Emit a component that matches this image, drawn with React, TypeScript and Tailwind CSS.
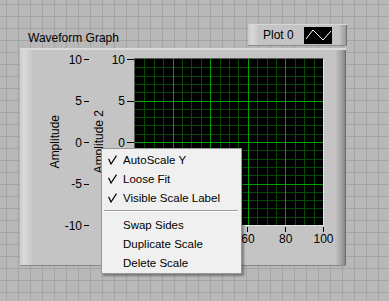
import React from 'react';

const yTicks = ['10', '5', '0', '-5', '-10'];
const xTicks = ['0', '20', '40', '60', '80', '100'];

const menuItems = [
  { label: 'AutoScale Y', checked: true },
  { label: 'Loose Fit', checked: true },
  { label: 'Visible Scale Label', checked: true },
  { label: '-' },
  { label: 'Swap Sides' },
  { label: 'Duplicate Scale' },
  { label: 'Delete Scale' },
];

function PlotGrid() {
  const w = 188;
  const h = 166;
  const minor: React.ReactNode[] = [];
  const major: React.ReactNode[] = [];
  for (let i = 1; i < 20; i++) {
    const x = Math.round((i * w) / 20) + 0.5;
    const y = Math.round((i * h) / 20) + 0.5;
    const v = <line key={'v' + i} x1={x} x2={x} y1={0} y2={h} stroke={i % 4 === 0 ? '#00a000' : '#064a06'} />;
    const hz = <line key={'h' + i} x1={0} x2={w} y1={y} y2={y} stroke={i % 5 === 0 ? '#00a000' : '#064a06'} />;
    (i % 4 === 0 ? major : minor).push(v);
    (i % 5 === 0 ? major : minor).push(hz);
  }
  return (
    <svg width={w} height={h} shapeRendering="crispEdges" className="block">
      {minor}
      {major}
    </svg>
  );
}

function YScale({ tickClass }: { tickClass: string }) {
  return (
    <div className="flex h-[168px] flex-col justify-between pt-px">
      {yTicks.map((v) => (
        <div key={v} className="flex h-px items-center justify-end">
          <span className="leading-[14px] whitespace-nowrap">{v}</span>
          <span className={tickClass} />
        </div>
      ))}
    </div>
  );
}

function Check() {
  return (
    <svg width="9" height="10" viewBox="0 0 9 10" className="block">
      <path d="M0.6 3.8 L3 9 L8.5 0.6" fill="none" stroke="#000" strokeWidth="1.2" />
    </svg>
  );
}

export default function App() {
  return (
    <div className="relative h-[301px] w-[389px] overflow-hidden bg-[#b8b8b8] bg-[linear-gradient(to_right,#a4a4a4_1px,transparent_1px),linear-gradient(to_bottom,#a4a4a4_1px,transparent_1px)] pt-[24px] pl-[20px] font-['Liberation_Sans',Arial,sans-serif] text-[12px] text-black [background-position:6px_4px] [background-size:12px_12px]">
      {/* label + legend */}
      <div className="flex w-[327px] items-end">
        <span className="mb-px ml-[8px] leading-[14px]">Waveform Graph</span>
        <div className="ml-auto flex h-[22px] w-[99px] items-center border-t border-b border-t-[#d6d6d6] border-b-[#8a8a8a] bg-[#c4c4c4]">
          <div className="h-full w-[10px] bg-[linear-gradient(to_right,#cacaca,#d8d8d8_40%,#c8c8c8)]" />
          <span className="ml-[5px] leading-[14px]">Plot 0</span>
          <div className="ml-auto h-[17px] w-[28px] bg-black">
            <svg width="28" height="17" className="block">
              <polyline points="2,12 9,3 19,13 27,4" fill="none" stroke="#fff" strokeWidth="1" />
            </svg>
          </div>
          <div className="ml-[8px] h-full w-[7px] border-r border-[#707070] bg-[linear-gradient(to_right,#bcbcbc,#9a9a9a)]" />
        </div>
      </div>

      {/* graph frame */}
      <div className="mt-[2px] flex h-[218px] w-[326px] border-t-2 border-b border-t-[#dadada] border-b-[#888888] bg-[#c4c4c4]">
        <div className="w-[12px] bg-[linear-gradient(to_right,#cbcbcb,#d9d9d9_30%,#c8c8c8)]" />
        <div className="flex flex-1 items-start pt-[8px]">
          <div className="flex h-[168px] w-[30px] items-center justify-end">
            <span className="rotate-180 leading-[14px] whitespace-nowrap [writing-mode:vertical-rl]">Amplitude</span>
          </div>
          <div className="w-[27px]">
            <YScale tickClass="ml-[2px] h-px w-[5px] shrink-0 bg-black" />
          </div>
          <div className="flex h-[168px] w-[17px] items-center justify-end">
            <span className="rotate-180 leading-[14px] whitespace-nowrap [writing-mode:vertical-rl]">Amplitude 2</span>
          </div>
          <div className="w-[28px]">
            <YScale tickClass="ml-[2px] h-px w-[7px] shrink-0 bg-black" />
          </div>
          <div className="flex w-[190px] flex-col">
            <div className="h-[168px] border border-t-[#5c5c5c] border-r-[#e4e4e4] border-b-[#e4e4e4] border-l-[#5c5c5c] bg-black">
              <PlotGrid />
            </div>
            <div className="flex justify-between">
              {xTicks.map((v) => (
                <div key={v} className="flex w-px flex-col items-center">
                  <div className="mt-px h-[5px] w-px bg-black" />
                  <span className="leading-[14px] whitespace-nowrap">{v}</span>
                </div>
              ))}
            </div>
            <div className="mt-[2px] text-center leading-[14px]">Time</div>
          </div>
        </div>
        <div className="w-[11px] border-r border-[#6e6e6e] bg-[linear-gradient(to_right,#c4c4c4,#a8a8a8_55%,#858585)]" />
      </div>

      {/* context menu */}
      <div className="absolute top-[148px] left-[101px] w-[141px] border border-[#979797] bg-[#f0f0f0] py-px text-[11.5px] shadow-[2px_2px_2px_rgba(0,0,0,0.35)]">
        {menuItems.map((item, i) =>
          item.label === '-' ? (
            <div key={i} className="flex h-[8px] flex-col justify-center pr-[3px] pl-[2px]">
              <div className="h-px bg-[#a0a0a0]" />
              <div className="h-px bg-white" />
            </div>
          ) : (
            <div key={i} className="flex h-[19px] items-center">
              <div className="flex w-[21px] pl-[6px]">{item.checked && <Check />}</div>
              <span className="leading-[14px] whitespace-nowrap">{item.label}</span>
            </div>
          )
        )}
      </div>
    </div>
  );
}
